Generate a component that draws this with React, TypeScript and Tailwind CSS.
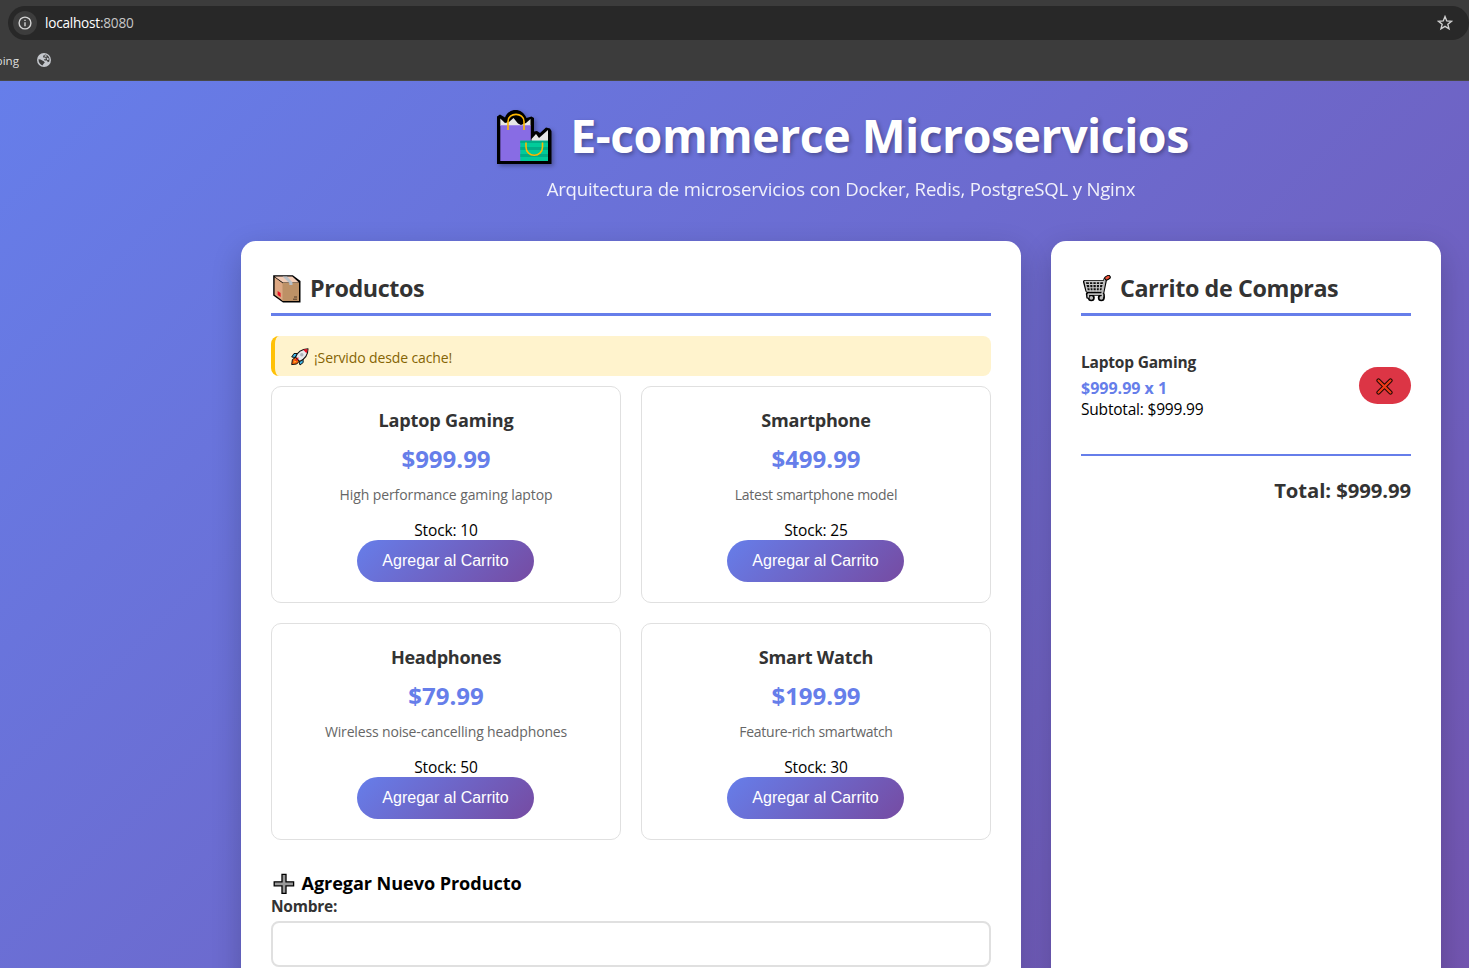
import type { ReactNode } from "react";

type Product = {
  name: string;
  nameTracking: string;
  price: string;
  description: string;
  descriptionTracking: string;
  stock: number;
};

const products: Product[] = [
  {
    name: "Laptop Gaming",
    nameTracking: "tracking-[-0.16px]",
    price: "$999.99",
    description: "High performance gaming laptop",
    descriptionTracking: "tracking-[-0.09px]",
    stock: 10,
  },
  {
    name: "Smartphone",
    nameTracking: "tracking-[-0.26px]",
    price: "$499.99",
    description: "Latest smartphone model",
    descriptionTracking: "tracking-[-0.26px]",
    stock: 25,
  },
  {
    name: "Headphones",
    nameTracking: "tracking-[-0.28px]",
    price: "$79.99",
    description: "Wireless noise-cancelling headphones",
    descriptionTracking: "tracking-[-0.15px]",
    stock: 50,
  },
  {
    name: "Smart Watch",
    nameTracking: "tracking-[-0.24px]",
    price: "$199.99",
    description: "Feature-rich smartwatch",
    descriptionTracking: "tracking-[-0.28px]",
    stock: 30,
  },
];

function InfoIcon() {
  return (
    <svg width="14" height="14" viewBox="0 0 14 14" fill="none">
      <circle cx="7" cy="7" r="5.9" stroke="#d5d5d5" strokeWidth="1.4" />
      <path d="M7 6.2v4" stroke="#d5d5d5" strokeWidth="1.4" />
      <path d="M7 3.7v1.4" stroke="#d5d5d5" strokeWidth="1.4" />
    </svg>
  );
}

function StarIcon() {
  return (
    <svg width="16" height="16" viewBox="0 0 16 16" fill="none">
      <path
        d="M8 1.6l1.75 4.35 4.7.35-3.6 3.02 1.15 4.55L8 11.4l-4 2.47 1.15-4.55-3.6-3.02 4.7-.35z"
        stroke="#d0d0d0"
        strokeWidth="1.4"
      />
    </svg>
  );
}

function GlobeIcon() {
  return (
    <svg width="14" height="14" viewBox="0 0 14 14">
      <circle cx="7" cy="7" r="7" fill="#c4c7cc" />
      <path d="M8.200 1.500L6.200 2.700V4.500H8.300L9 6.200H6.800L7.600 7.600H10L10.800 9.200 12.300 8.600 12.500 6C12.200 3.700 10.500 1.900 8.200 1.500z" fill="#3c3c3c" />
      <path d="M1.500 6.300L3.500 6.600 5.300 7.600 6.800 8.200 7.800 9.500 6.600 10.700 5.400 12.400C3.200 11.700 1.400 9.600 1.500 6.300z" fill="#3c3c3c" />
      <path d="M7.600 2.300h2v1.500h-2zM9.500 4.500l2 .5.300 1.700-1.600.2z" fill="#c4c7cc" />
    </svg>
  );
}

function BagsIcon() {
  return (
    <svg width="55" height="54" viewBox="0 0 55 54" className="overflow-visible drop-shadow-[2px_2px_2px_rgba(0,0,0,0.3)]">
      <path
        d="M0 54V6.500L3 4.500 8 7.500C10 2.500 14 0 18.500 0S27 2.500 29.500 8L34.500 6.500 37 8V21.500L40 21 43 23 49 17.500 53 18.500 54.500 21V54z"
        fill="#000"
      />
      <path d="M3.300 16V8.500L8 13 12 12 16.500 8 21 13.500 24 15 29 13 33.500 9V16z" fill="#e6e6e6" />
      <path d="M3.300 15.300H33.800V51H3.300z" fill="#886ce4" />
      <path d="M34.500 31V29L39 24 42 28 51 20V31z" fill="#e6e6e6" />
      <path d="M23.300 30.700H51V51H23.300z" fill="#00cc9a" />
      <path d="M23.300 30.700H51V33H23.300zM23.300 37H51V40H23.300zM23.300 44H51V47H23.300z" fill="#00ae87" />
      <path d="M11 20V11.500C11 2 27 2 27 11.500V20" fill="none" stroke="#ffb900" strokeWidth="1.6" />
      <path d="M29 32.500V37C29 48 45.500 48 45.500 37V32.500" fill="none" stroke="#ffb900" strokeWidth="1.6" />
    </svg>
  );
}

function BoxIcon() {
  return (
    <svg width="28" height="28" viewBox="0 0 28 28">
      <path d="M.2.2H19.800L27.500 6V27.500H10L.2 20.500z" fill="#000" />
      <path d="M1.600 2.200L10 8.500V25.900L1.600 19.800z" fill="#dda883" />
      <path d="M1.600 1.600H19.300L26 7.500H10z" fill="#f3cdb7" />
      <path d="M9.500 7.700H26V26H9.500z" fill="#bd9166" />
      <path d="M9.500 1.600h4.500l5.500 6v2.500h-3.200V8z" fill="#b9c0c6" />
      <path d="M4.600 16l3 2v4l-3-2z" fill="#e81224" />
      <path d="M21 22h3M20 24.200h4" stroke="#513b29" strokeWidth="1" />
    </svg>
  );
}

function RocketIcon() {
  return (
    <svg width="18" height="18" viewBox="0 0 18 18" strokeLinejoin="round">
      <path d="M6.500 5.500L3 5.500.7 9l3.500.5zM12 11l.2 3.500L9 17l-1-3.500z" fill="#3fb8e8" stroke="#111" strokeWidth="1" />
      <path d="M4.500 9.500L1.400 11.500.7 16.600l5-.6 2.600-2.800z" fill="#f7630c" stroke="#111" strokeWidth="1" />
      <path d="M4 12.500l-1.300 2.300 2.600-1z" fill="#ffc83d" />
      <path d="M4.500 9.200C6.200 4.400 11 1 17 .7c0 5.500-3.300 10.500-8.500 12.700z" fill="#e9eaec" stroke="#111" strokeWidth="1.100" />
      <path d="M12.200 1.800c1.500-.6 2.800-.8 4.300-.8 0 1.500-.4 3-1 4.200z" fill="#e81224" />
      <circle cx="10.800" cy="6.800" r="1.700" fill="#aeb4bb" />
      <path d="M7.300 9.700L4.600 12.800" stroke="#e81224" strokeWidth="1.200" />
    </svg>
  );
}

function CartIcon() {
  return (
    <svg width="28" height="27" viewBox="0 0 28 27" fill="none" strokeLinecap="round" strokeLinejoin="round">
      <path d="M1.800 6.800H21L18.800 15.800H4.200zM25.500 2.200L22.300 4.200 19.500 17.500 18.500 19H4.600" stroke="#000" strokeWidth="3.700" />
      <path d="M5 19.500V22M20 19.500V22" stroke="#000" strokeWidth="3.700" />
      <circle cx="8.300" cy="22.700" r="3.500" fill="#000" />
      <circle cx="18.300" cy="22.700" r="3.500" fill="#000" />
      <path d="M2 6.500H21L19 16H4.200z" fill="#111" stroke="#c9c9c9" strokeWidth="1.400" />
      <path d="M3 9.500H20M3.500 12.800H19.500M6.300 7l1 9M9.800 7l.3 9M13.300 7v9M16.800 7l-.6 9" stroke="#c9c9c9" strokeWidth="1.100" />
      <path d="M24 2.800L22 4.500 19.500 17.500 18.300 19.200H5.500" stroke="#b8b8b8" strokeWidth="1.700" />
      <path d="M5.300 19.500v2.500M19.500 19.500v2.500" stroke="#c9c9c9" strokeWidth="1.600" />
      <circle cx="8.300" cy="22.900" r="1.800" fill="#bcbcbc" />
      <circle cx="18.300" cy="22.900" r="1.800" fill="#bcbcbc" />
      <path d="M23.600 3.200l1.800-1" stroke="#000" strokeWidth="4.600" />
      <path d="M23.600 3.200l1.800-1" stroke="#f0553a" strokeWidth="2.600" />
    </svg>
  );
}

function PlusIcon() {
  return (
    <svg width="22" height="22" viewBox="0 0 22 22">
      <path d="M9 1.300h4v7.500h7.600v4H13v7.600H9v-7.600H1.200v-4H9z" fill="#999" stroke="#000" strokeWidth="1.300" />
    </svg>
  );
}

function CrossIcon() {
  return (
    <svg width="17" height="17" viewBox="0 0 17 17" fill="none" strokeLinecap="round">
      <path d="M2.500 2.500l12 12M14.500 2.500l-12 12" stroke="#1a0805" strokeWidth="4.200" />
      <path d="M2.500 2.500l12 12M14.500 2.500l-12 12" stroke="#f03a17" strokeWidth="2.300" />
    </svg>
  );
}

function BrowserChrome() {
  return (
    <div className="h-[81px] w-full border-b border-[#484848] bg-[#3c3c3c] pt-1.5">
      <div className="ml-2 flex h-[34px] items-center rounded-full bg-[#282828] pl-[5px] pr-4">
        <div className="flex h-6 w-6 items-center justify-center rounded-full bg-[#3d3d3d]">
          <InfoIcon />
        </div>
        <div className="ml-2 flex-1 text-[13.600px] tracking-[-0.22px] text-white">
          localhost<span className="text-[#c7c7c7]">:8080</span>
        </div>
        <StarIcon />
      </div>
      <div className="flex h-10 items-center">
        <div className="flex w-[19px] justify-end overflow-hidden pt-px text-[11.600px] leading-5 text-[#dedede]">
          <span>ping</span>
        </div>
        <div className="ml-[18px]">
          <GlobeIcon />
        </div>
      </div>
    </div>
  );
}

function PanelTitle({ icon, children }: { icon: ReactNode; children: ReactNode }) {
  return (
    <h2 className="mb-5 flex h-[45px] border-b-[3px] border-[#667eea] pl-0.5 pt-px text-[23.300px] font-bold leading-[32px] tracking-[-0.4px] text-[#333]">
      <span className="flex h-[33px] w-[37px] shrink-0 items-center">{icon}</span>
      <span>{children}</span>
    </h2>
  );
}

function ProductCard({ product }: { product: Product }) {
  return (
    <article className="flex h-[217px] flex-col items-center rounded-[10px] border border-[#e0e0e0] pb-5 pt-[21px] text-center">
      <h3 className={`mb-2.5 text-[18.100px] font-bold leading-[25px] text-[#333] ${product.nameTracking}`}>{product.name}</h3>
      <div className="mb-2.5 text-2xl font-bold leading-[32px] text-[#667eea]">{product.price}</div>
      <p className={`mb-[15px] text-[14px] leading-5 text-[#666] ${product.descriptionTracking}`}>{product.description}</p>
      <div className="h-5 text-[15.500px] leading-[21px] tracking-[-0.13px] text-black">Stock: {product.stock}</div>
      <button className="mr-px h-[42px] w-[177px] shrink-0 rounded-[25px] bg-[linear-gradient(135deg,#667eea_0%,#764ba2_100%)] font-['Liberation_Sans',sans-serif] text-base text-white">
        Agregar al Carrito
      </button>
    </article>
  );
}

export default function App() {
  return (
    <div className="h-[968px] w-[1469px] overflow-hidden font-['Open_Sans','Noto_Sans',sans-serif]">
      <BrowserChrome />
      <div className="h-[1250px] w-[1682px] bg-[linear-gradient(135deg,#667eea_0%,#764ba2_100%)] pt-5">
        <header className="mb-[39px] flex flex-col items-center text-white">
          <h1 className="flex h-16 items-center pl-1">
            <span className="mr-[18px] mt-[7px] block">
              <BagsIcon />
            </span>
            <span className="pt-1 text-[46.500px] font-bold leading-[64px] tracking-[-0.51px] [text-shadow:2px_2px_4px_rgba(0,0,0,0.3)]">
              E-commerce Microservicios
            </span>
          </h1>
          <p className="mt-2.5 text-[18.600px] leading-[27px] tracking-[-0.2px] opacity-90">
            Arquitectura de microservicios con Docker, Redis, PostgreSQL y Nginx
          </p>
        </header>

        <main className="mx-auto grid w-[1200px] grid-cols-[780px_390px] gap-[30px]">
          <section className="h-[1000px] rounded-[15px] bg-white p-[30px] shadow-[0_10px_30px_rgba(0,0,0,0.2)]">
            <PanelTitle icon={<BoxIcon />}>Productos</PanelTitle>
            <div className="mb-2.5 flex h-10 items-center rounded-lg border-l-4 border-[#ffc107] bg-[#fff3cd] pl-4 pt-0.5 text-[14px] tracking-[-0.12px] text-[#856404]">
              <RocketIcon />
              <span className="ml-[5px]">¡Servido desde cache!</span>
            </div>
            <div className="grid grid-cols-2 gap-5">
              {products.map((product) => (
                <ProductCard key={product.name} product={product} />
              ))}
            </div>
            <form className="mt-[30px]">
              <h3 className="flex h-[25px] items-center pl-[1.500px] pt-0.5 text-[18.100px] font-bold leading-[25px] tracking-[-0.07px] text-black">
                <PlusIcon />
                <span className="ml-[7px]">Agregar Nuevo Producto</span>
              </h3>
              <label htmlFor="nombre" className="mb-1 block text-[15.500px] font-bold leading-[22px] tracking-[-0.25px] text-[#333]">
                Nombre:
              </label>
              <input id="nombre" className="block h-[46px] w-full rounded-lg border-2 border-[#e0e0e0] bg-white px-3 text-base" />
            </form>
          </section>

          <section className="h-[1000px] rounded-[15px] bg-white p-[30px] shadow-[0_10px_30px_rgba(0,0,0,0.2)]">
            <PanelTitle icon={<CartIcon />}>Carrito de Compras</PanelTitle>
            <div className="flex items-center justify-between pt-[15px]">
              <div>
                <h4 className="mb-1 text-[15.500px] font-bold leading-[22px] tracking-[-0.2px] text-[#333]">Laptop Gaming</h4>
                <div className="text-base font-bold leading-[22px] text-[#667eea]">$999.99 x 1</div>
                <div className="text-[15.500px] leading-[21px] tracking-[-0.2px] text-black">Subtotal: $999.99</div>
              </div>
              <button aria-label="Eliminar" className="flex h-[37px] w-[52px] items-center justify-center rounded-[20px] bg-[#dc3545] pr-[1.500px] pt-0.5">
                <CrossIcon />
              </button>
            </div>
            <div className="mt-[34px] border-t-2 border-[#667eea] pt-5 text-right text-[20.300px] font-bold leading-[28px] tracking-[-0.08px] text-[#333]">
              Total: $999.99
            </div>
          </section>
        </main>
      </div>
    </div>
  );
}
